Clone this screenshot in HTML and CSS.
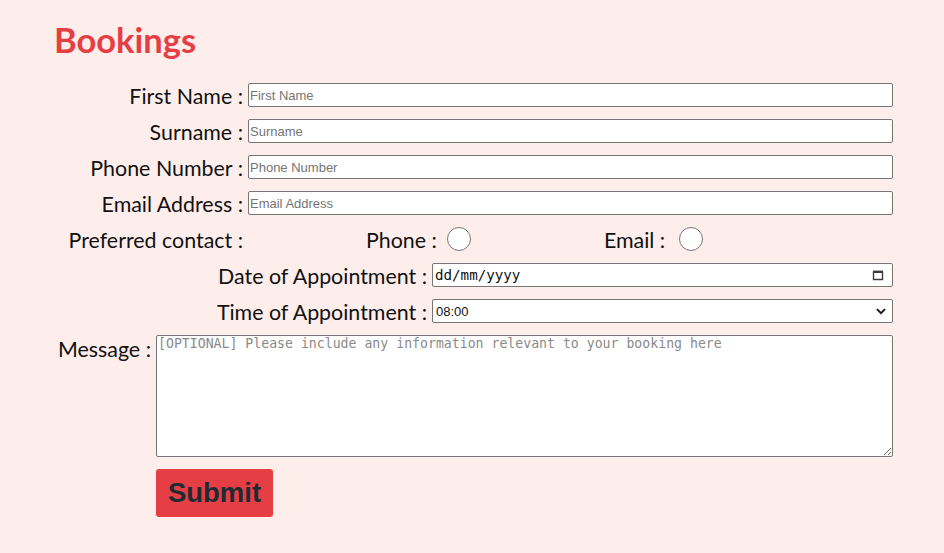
FILE: index.html
```html
<!DOCTYPE html>
<html lang="en">
<head>
<meta charset="utf-8">
<title>Bookings</title>
<link rel="stylesheet" href="styles.css">
</head>
<body>
<main class="page">
  <h1 class="title">Bookings</h1>
  <form class="form">
    <div class="row">
      <label class="lbl lbl-a" for="fn">First Name :</label>
      <input class="field field-a" id="fn" type="text" placeholder="First Name">
    </div>
    <div class="row">
      <label class="lbl lbl-a" for="sn">Surname :</label>
      <input class="field field-a" id="sn" type="text" placeholder="Surname">
    </div>
    <div class="row">
      <label class="lbl lbl-a" for="ph">Phone Number :</label>
      <input class="field field-a" id="ph" type="text" placeholder="Phone Number">
    </div>
    <div class="row">
      <label class="lbl lbl-a" for="em">Email Address :</label>
      <input class="field field-a" id="em" type="text" placeholder="Email Address">
    </div>
    <div class="row">
      <span class="lbl lbl-a">Preferred contact :</span>
      <div class="contact">
        <label class="opt opt-phone"><span class="opt-text">Phone :</span><input class="radio" type="radio" name="contact"></label>
        <label class="opt opt-email"><span class="opt-text">Email :</span><input class="radio" type="radio" name="contact"></label>
      </div>
    </div>
    <div class="row">
      <label class="lbl lbl-b" for="dt">Date of Appointment :</label>
      <div class="field field-b datebox">
        <input class="date-input" id="dt" type="text" placeholder="dd/mm/yyyy">
        <svg class="cal" width="12" height="12" viewBox="0 0 12 12" aria-hidden="true">
          <path d="M1.5 3.2h9v7.3h-9z" fill="none" stroke="#3c3c3c" stroke-width="1.4"/>
          <path d="M1 1.6h10v2.4H1z" fill="#3c3c3c"/>
        </svg>
      </div>
    </div>
    <div class="row">
      <label class="lbl lbl-b" for="tm">Time of Appointment :</label>
      <div class="field field-b selbox">
        <select class="sel" id="tm">
          <option>08:00</option>
          <option>09:00</option>
          <option>10:00</option>
        </select>
        <svg class="chev" width="10" height="7" viewBox="0 0 10 7" aria-hidden="true">
          <path d="M1 1.2l4 4 4-4" fill="none" stroke="#111" stroke-width="1.8"/>
        </svg>
      </div>
    </div>
    <div class="row row-msg">
      <label class="lbl lbl-c" for="msg">Message :</label>
      <textarea class="msg" id="msg" placeholder="[OPTIONAL] Please include any information relevant to your booking here"></textarea>
    </div>
    <div class="row row-btn">
      <button class="submit" type="submit">Submit</button>
    </div>
  </form>
</main>
</body>
</html>
```

FILE: styles.css
```css
html, body {
  margin: 0;
  padding: 0;
  background: #fdeeec;
}
body {
  font-family: "Lato", "Noto Sans", sans-serif;
  color: #111;
}
.page {
  padding: 20px 0 0 54px;
  width: 839px;
}
.title {
  margin: 0 0 23px 0;
  font-size: 34.5px;
  line-height: 40px;
  font-weight: 700;
  color: #e63e45;
}
.form {
  display: flex;
  flex-direction: column;
  gap: 12px;
}
.row {
  display: flex;
  align-items: center;
  gap: 5px;
  height: 24px;
}
.lbl {
  font-size: 21.4px;
  text-align: right;
  white-space: nowrap;
  padding-top: 2px;
}
.lbl-a { width: 189px; flex: none; }
.lbl-b { width: 373px; flex: none; }
.lbl-c { width: 97px; flex: none; padding-top: 0; }
.field {
  box-sizing: border-box;
  height: 24px;
  border: 1px solid #767676;
  border-radius: 2px;
  background: #fff;
  font-family: "Liberation Sans", Arial, sans-serif;
  font-size: 13px;
  color: #111;
  padding: 0 2px 0 1px;
  margin: 0;
}
.field-a { width: 645px; }
.field-b { width: 461px; }
.field::placeholder { color: #757575; }
.contact {
  display: flex;
  align-items: center;
  padding-left: 118px;
}
.opt {
  display: flex;
  align-items: center;
  gap: 10px;
  font-size: 21.4px;
  white-space: nowrap;
}
.opt-text { padding-top: 2px; }
.opt-email { margin-left: 133px; gap: 14px; }
.radio {
  appearance: none;
  -webkit-appearance: none;
  box-sizing: border-box;
  width: 24px;
  height: 24px;
  margin: 0;
  border: 1px solid #767676;
  border-radius: 50%;
  background: #fff;
}
.datebox {
  display: flex;
  align-items: center;
  padding: 0 8px 0 2px;
}
.date-input {
  flex: 1;
  border: 0;
  outline: 0;
  background: transparent;
  padding: 0;
  font-family: "DejaVu Sans Mono", monospace;
  font-size: 14.2px;
  color: #111;
}
.date-input::placeholder { color: #111; }
.cal { flex: none; }
.selbox {
  position: relative;
  padding: 0;
}
.sel {
  appearance: none;
  -webkit-appearance: none;
  width: 100%;
  height: 22px;
  border: 0;
  background: transparent;
  padding: 0 3px;
  font-family: "Liberation Sans", Arial, sans-serif;
  font-size: 13px;
  color: #111;
  outline: 0;
}
.chev {
  position: absolute;
  right: 6px;
  top: 8px;
  pointer-events: none;
}
.row-msg {
  height: 122px;
  align-items: flex-start;
}
.row-msg .lbl { line-height: 28px; }
.msg {
  box-sizing: border-box;
  width: 737px;
  height: 122px;
  margin: 0;
  border: 1px solid #767676;
  border-radius: 2px;
  background: #fff;
  padding: 0 1px;
  font-family: "DejaVu Sans Mono", monospace;
  font-size: 13.2px;
  line-height: 16px;
}
.msg::placeholder { color: #8a8a8a; }
.row-btn {
  height: 48px;
  padding-left: 102px;
}
.submit {
  width: 117px;
  height: 48px;
  border: 0;
  border-radius: 3px;
  background: #e63e45;
  color: #1e2b32;
  font-family: "Liberation Sans", Arial, sans-serif;
  font-weight: 700;
  font-size: 27.5px;
  padding: 0;
}
```
